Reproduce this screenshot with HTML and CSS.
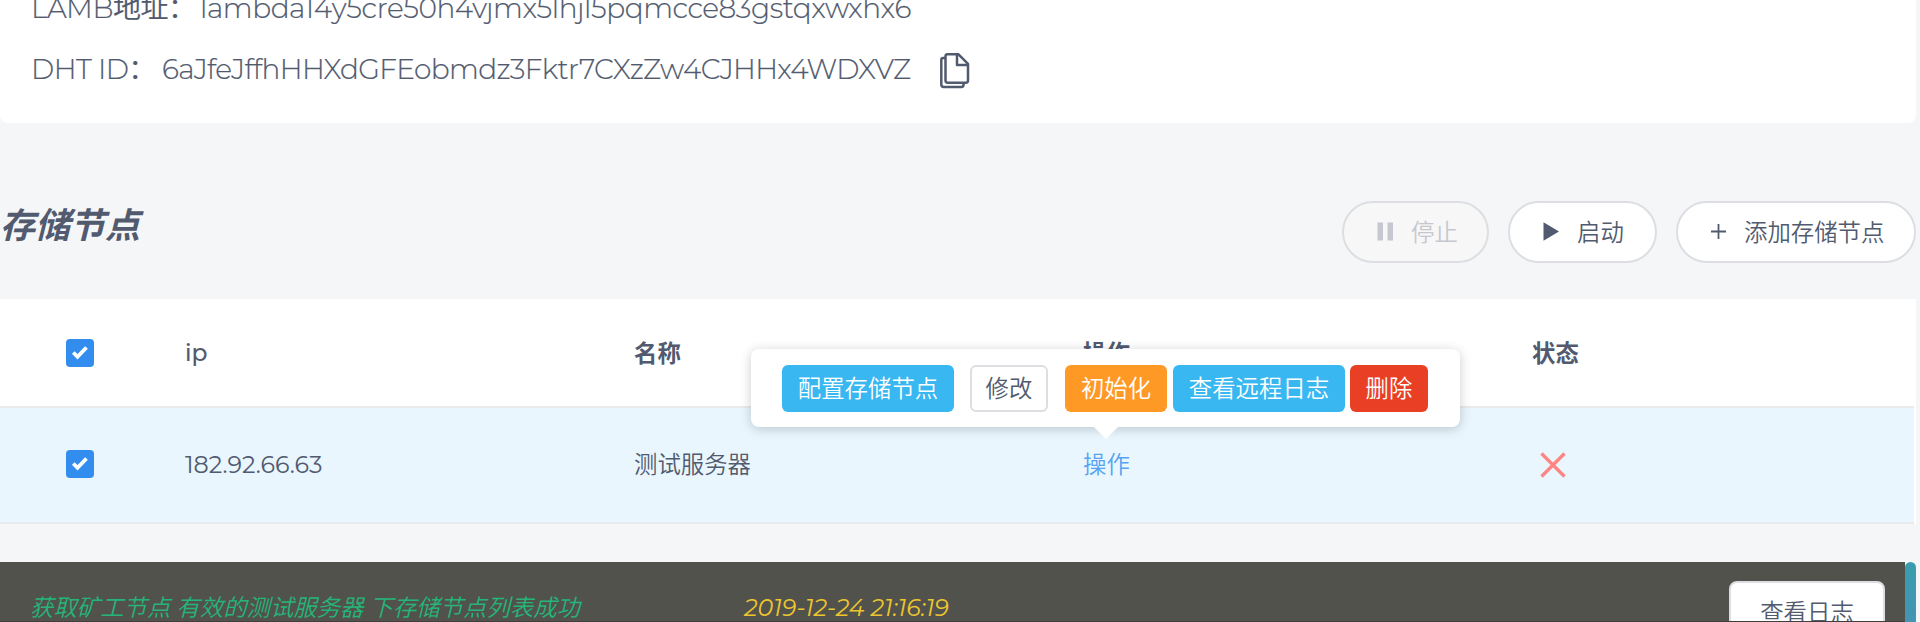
FILE: index.html
```html
<!DOCTYPE html>
<html lang="zh-CN">
<head>
<meta charset="utf-8">
<title>存储节点</title>
<link rel="stylesheet" href="styles.css">
</head>
<body>
<section class="info">
  <div class="info-line"><span class="label-lamb">LAMB地址：</span><span class="address">lambda14y5cre50h4vjmx5lhjl5pqmcce83gstqxwxhx6</span></div>
  <div class="info-line"><span class="label-dht">DHT ID：</span><span class="dht">6aJfeJffhHHXdGFEobmdz3Fktr7CXzZw4CJHHx4WDXVZ</span>
    <svg class="copy" width="30" height="36" viewBox="0 0 30 36" fill="none" stroke="#515a6e" stroke-width="2.5" stroke-linejoin="round"><path d="M5.500 5H3.200Q1.300 5 1.300 7V31.500Q1.300 33.900 3.700 33.900H21.500Q23.600 33.900 23.600 31.500V30"/><path d="M7.500 1.300H18.500L28 10.800V27.500Q28 29.700 25.800 29.700H7.800Q5.500 29.700 5.500 27.500V3.500Q5.500 1.300 7.500 1.300Z"/><path d="M17 1.500V12H28"/></svg>
  </div>
</section>
<section class="toolbar">
  <h2 class="title">存储节点</h2>
  <div class="actions">
    <button class="pill pill-stop"><svg width="16" height="20" viewBox="0 0 16 20"><path d="M.5 .5H6v18H.5zM10.500 .5H16v18h-5.500z" fill="#c5c8ce"/></svg><span>停止</span></button>
    <button class="pill pill-start"><svg width="16" height="20" viewBox="0 0 16 20"><path d="M.5 .3L16 9.500 .5 18.700z" fill="#515a6e"/></svg><span>启动</span></button>
    <button class="pill pill-add"><svg width="16" height="20" viewBox="0 0 16 20"><path d="M0 9.500h15M7.500 2v15" stroke="#515a6e" stroke-width="1.800"/></svg><span>添加存储节点</span></button>
  </div>
</section>
<section class="table">
  <div class="row head">
    <div class="check"><span class="box"><svg width="28" height="28" viewBox="0 0 28 28"><path d="M7.300 13.500l4.200 4.300L20.500 8.500" fill="none" stroke="#fff" stroke-width="3.800"/></svg></span></div>
    <div class="ip-head">ip</div><div>名称</div><div>操作</div><div>状态</div>
  </div>
  <div class="row body">
    <div class="check"><span class="box"><svg width="28" height="28" viewBox="0 0 28 28"><path d="M7.300 13.500l4.200 4.300L20.500 8.500" fill="none" stroke="#fff" stroke-width="3.800"/></svg></span></div>
    <div class="ip">182.92.66.63</div><div class="name">测试服务器</div>
    <div class="op"><a class="link">操作</a>
      <div class="popover">
        <button class="btn blue">配置存储节点</button><button class="btn plain">修改</button><button class="btn orange">初始化</button><button class="btn blue logs">查看远程日志</button><button class="btn red">删除</button>
      </div>
    </div>
    <div><svg class="cross" width="26" height="26" viewBox="0 0 26 26"><path d="M1.500 1.500l23 23M24.500 1.500l-23 23" stroke="#ff8585" stroke-width="3.300"/></svg></div>
  </div>
</section>
<footer class="log">
  <div class="log-panel">
    <span class="message">获取矿工节点 有效的测试服务器 下存储节点列表成功</span>
    <span class="time">2019-12-24 21:16:19</span>
    <button class="view">查看日志</button>
  </div>
  <div class="scroll"></div>
</footer>
</body>
</html>
```
FILE: styles.css
```css
* { box-sizing: border-box; }
body {
  margin: 0;
  width: 1920px;
  height: 622px;
  overflow: hidden;
  background: #f5f6f8;
  color: #515a6e;
  font-family: Montserrat, "Noto Sans CJK SC", sans-serif;
  font-size: 23.4px;
  font-weight: 350;
}
button { font: inherit; color: inherit; margin: 0; padding: 0; white-space: nowrap; }
svg { display: block; flex: none; }
.info {
  width: 1916px;
  height: 123px;
  padding-left: 31px;
  background: #fff;
  border-radius: 0 0 8px 8px;
  overflow: hidden;
  font-size: 28px;
}
.info-line { display: flex; align-items: baseline; height: 61px; line-height: 60px; white-space: nowrap; }
.info-line:first-child { margin-top: -22px; }
.info-line span { -webkit-text-stroke: .2px #515a6e; }
.label-lamb { width: 169px; letter-spacing: -.5px; }
.label-dht { width: 131px; letter-spacing: -.5px; }
.address { letter-spacing: -.42px; }
.dht { letter-spacing: -.65px; }
.copy { margin-left: 29px; align-self: center; margin-top: 3px; }
.toolbar {
  display: flex;
  justify-content: space-between;
  align-items: flex-start;
  width: 1916px;
  height: 176px;
  padding-top: 78px;
}
.title { margin: 0; font-size: 35px; line-height: 50px; font-weight: 600; font-style: italic; }
.actions { display: flex; gap: 19px; }
.pill {
  display: flex;
  align-items: center;
  gap: 18px;
  height: 62px;
  padding-left: 33px;
  border: 2px solid #dcdee2;
  border-radius: 31px;
  background: #fff;
}
.pill span { padding-bottom: 3px; }
.pill-stop { width: 147px; background: #f7f7f7; color: #c5c8ce; }
.pill-start { width: 149px; }
.pill-add { width: 240px; gap: 17px; }
.table { width: 1916px; background: #fff; }
.row {
  display: grid;
  grid-template-columns: 185px 449px 449px 449px 382px;
  align-items: center;
  width: 1914px;
  border-bottom: 2px solid #e8eaec;
}
.head { height: 109px; font-weight: 600; padding-bottom: 1px; }
.ip-head { font-weight: 500; }
.body { height: 116px; padding-bottom: 2px; background: #e9f6fe; }
.ip { font-size: 23.8px; font-weight: 400; }
.name, .link { position: relative; top: -1px; }
.check { padding-left: 66px; }
.head .check { padding-top: 1px; }
.box { display: block; width: 28px; height: 28px; border-radius: 4px; background: #338def; }
.cross { margin-left: 8px; margin-top: 1px; }
.op { position: relative; }
.link { color: #57a3f3; }
.popover {
  position: absolute;
  left: -332px;
  top: -98px;
  display: flex;
  align-items: center;
  width: 709px;
  height: 78px;
  padding-left: 31px;
  border-radius: 8px;
  background: #fff;
  box-shadow: 0 2px 12px rgba(0, 0, 0, .2);
}
.popover::after {
  content: "";
  position: absolute;
  left: 343px;
  top: 78px;
  border: 12px solid transparent;
  border-top-color: #fff;
  border-bottom: 0;
}
.btn { height: 47px; padding-bottom: 3px; border: 0; border-radius: 6px; color: #fff; width: 172px; }
.blue { background: #38b7f1; }
.plain { width: 78px; margin: 0 17px 0 16px; border: 2px solid #dcdee2; background: #fff; color: #515a6e; }
.orange { width: 102px; background: #ff9926; }
.logs { margin: 0 5px 0 6px; }
.red { width: 78px; background: #e94025; }
.log { display: flex; width: 1916px; height: 60px; margin-top: 38px; }
.log-panel {
  display: grid;
  grid-template-columns: 714px 985px 156px;
  align-items: start;
  width: 1905px;
  padding-left: 30px;
  background: #51524c;
  border-bottom: 1px solid #403f3d;
  overflow: hidden;
  font-style: italic;
  white-space: nowrap;
}
.message { color: #25b579; line-height: 34px; margin-top: 29px; }
.time { color: #edc62f; line-height: 34px; margin-top: 29px; font-size: 23.75px; font-weight: 400; }
.view {
  height: 62px;
  margin-top: 19px;
  padding-bottom: 2px;
  border: 2px solid #dcdee2;
  border-radius: 8px;
  background: #fff;
  font-style: normal;
}
.scroll { flex: 1; border-radius: 6px 6px 0 0; background: linear-gradient(#389dad, #4594b4); }
```
